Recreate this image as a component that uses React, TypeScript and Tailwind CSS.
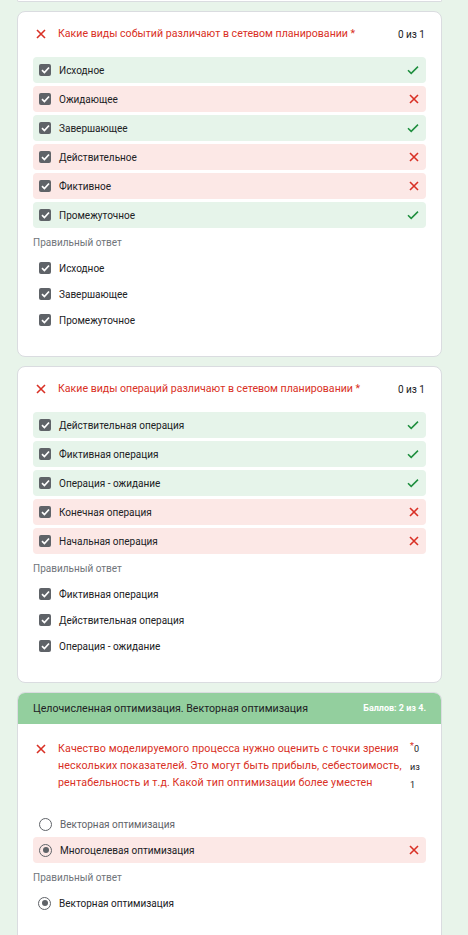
import React from 'react'

type Opt = { text: string; ok: boolean }

const q1: Opt[] = [
  { text: 'Исходное', ok: true },
  { text: 'Ожидающее', ok: false },
  { text: 'Завершающее', ok: true },
  { text: 'Действительное', ok: false },
  { text: 'Фиктивное', ok: false },
  { text: 'Промежуточное', ok: true },
]
const a1 = ['Исходное', 'Завершающее', 'Промежуточное']

const q2: Opt[] = [
  { text: 'Действительная операция', ok: true },
  { text: 'Фиктивная операция', ok: true },
  { text: 'Операция - ожидание', ok: true },
  { text: 'Конечная операция', ok: false },
  { text: 'Начальная операция', ok: false },
]
const a2 = ['Фиктивная операция', 'Действительная операция', 'Операция - ожидание']

function CrossIcon({ size = 10 }: { size?: number }) {
  return (
    <svg width={size} height={size} viewBox="0 0 10 10" className="shrink-0">
      <path d="M1 1L9 9M9 1L1 9" stroke="#d93025" strokeWidth="1.6" fill="none" />
    </svg>
  )
}

function CheckIcon() {
  return (
    <svg width="12" height="10" viewBox="0 0 12 10" className="shrink-0">
      <path d="M1 5.2L4.2 8.4L11 1.6" stroke="#1e8e3e" strokeWidth="1.5" fill="none" />
    </svg>
  )
}

function Checkbox() {
  return (
    <div className="w-[12px] h-[12px] rounded-[2px] bg-[#5f6368] flex items-center justify-center shrink-0">
      <svg width="9" height="8" viewBox="0 0 9 8">
        <path d="M1 4.2L3.4 6.5L8 1.5" stroke="white" strokeWidth="1.7" fill="none" />
      </svg>
    </div>
  )
}

function Radio({ checked }: { checked: boolean }) {
  return (
    <div className="w-[13px] h-[13px] rounded-full border-[1.5px] border-[#5f6368] flex items-center justify-center shrink-0">
      {checked && <div className="w-[6px] h-[6px] rounded-full bg-[#5f6368]" />}
    </div>
  )
}

function QuestionTitle({ title }: { title: string }) {
  return (
    <div className="flex items-center h-[16px] mb-[15px]">
      <div className="w-[25px] pl-[3px] flex items-center">
        <CrossIcon />
      </div>
      <div className="flex-1 text-[10.6px] leading-[16px] text-[#d93025]">{title}</div>
      <div className="text-[10px] text-[#202124] pr-[1px]">0 из 1</div>
    </div>
  )
}

function CheckQuestion({ title, options, answers }: { title: string; options: Opt[]; answers: string[] }) {
  return (
    <div className="bg-white border border-[#dadce0] rounded-[8px] px-[15px] pt-[14px] pb-[23px]">
      <QuestionTitle title={title} />
      <div className="flex flex-col gap-[3px]">
        {options.map((o) => (
          <div
            key={o.text}
            className={
              'h-[26px] rounded-[4px] flex items-center pl-[6px] pr-[7px] ' +
              (o.ok ? 'bg-[#e6f4ea]' : 'bg-[#fce8e6]')
            }
          >
            <Checkbox />
            <span className="ml-[8px] flex-1 text-[10px] text-[#202124]">{o.text}</span>
            {o.ok ? <CheckIcon /> : <CrossIcon size={10} />}
          </div>
        ))}
      </div>
      <div className="mt-[7px] text-[10px] leading-[16px] text-[#70757a]">Правильный ответ</div>
      <div className="mt-[4px] flex flex-col">
        {answers.map((a) => (
          <div key={a} className="h-[26px] flex items-center pl-[6px]">
            <Checkbox />
            <span className="ml-[8px] text-[10px] text-[#202124]">{a}</span>
          </div>
        ))}
      </div>
    </div>
  )
}

export default function App() {
  return (
    <div className="min-h-screen bg-[#e8f4ea] pl-[17px] pr-[26px] font-['Roboto',sans-serif]">
      <div className="h-[2px] bg-white border border-t-0 border-[#dadce0] rounded-b-[8px]" />
      <div className="mt-[9px] flex flex-col gap-[9px]">
        <CheckQuestion title="Какие виды событий различают в сетевом планировании *" options={q1} answers={a1} />
        <CheckQuestion title="Какие виды операций различают в сетевом планировании *" options={q2} answers={a2} />

        <div className="bg-white border border-[#dadce0] rounded-[8px] overflow-hidden pb-[60px]">
          <div className="h-[31px] bg-[#93cf9e] flex items-center justify-between px-[15px]">
            <span className="text-[10.6px] text-[#202124]">Целочисленная оптимизация. Векторная оптимизация</span>
            <span className="text-[9px] font-bold text-white">Баллов: 2 из 4.</span>
          </div>
          <div className="px-[15px] pt-[16px]">
            <div className="flex items-start">
              <div className="w-[25px] pl-[3px] h-[17px] flex items-center">
                <CrossIcon />
              </div>
              <div className="flex-1 text-[10.7px] tracking-[0.1px] leading-[17px] text-[#d93025]">
                <div className="whitespace-nowrap">Качество моделируемого процесса нужно оценить с точки зрения</div>
                <div className="whitespace-nowrap">нескольких показателей. Это могут быть прибыль, себестоимость,</div>
                <div className="whitespace-nowrap">рентабельность и т.д. Какой тип оптимизации более уместен</div>
              </div>
              <div className="w-[16px] shrink-0 text-[9px] leading-[18px] text-[#202124]">
                <div>
                  <span className="text-[#d93025] align-top leading-[12px]">*</span>0
                </div>
                <div>из</div>
                <div>1</div>
              </div>
            </div>
            <div className="mt-[17px] flex flex-col">
              <div className="h-[26px] flex items-center pl-[6px]">
                <Radio checked={false} />
                <span className="ml-[8px] text-[10px] text-[#5f6368]">Векторная оптимизация</span>
              </div>
              <div className="h-[26px] rounded-[4px] bg-[#fce8e6] flex items-center pl-[6px] pr-[7px]">
                <Radio checked />
                <span className="ml-[8px] flex-1 text-[10px] text-[#202124]">Многоцелевая оптимизация</span>
                <CrossIcon />
              </div>
            </div>
            <div className="mt-[7px] text-[10px] leading-[16px] text-[#70757a]">Правильный ответ</div>
            <div className="mt-[4px] h-[26px] flex items-center pl-[5px]">
              <Radio checked />
              <span className="ml-[8px] text-[10px] text-[#202124]">Векторная оптимизация</span>
            </div>
          </div>
        </div>
      </div>
    </div>
  )
}
